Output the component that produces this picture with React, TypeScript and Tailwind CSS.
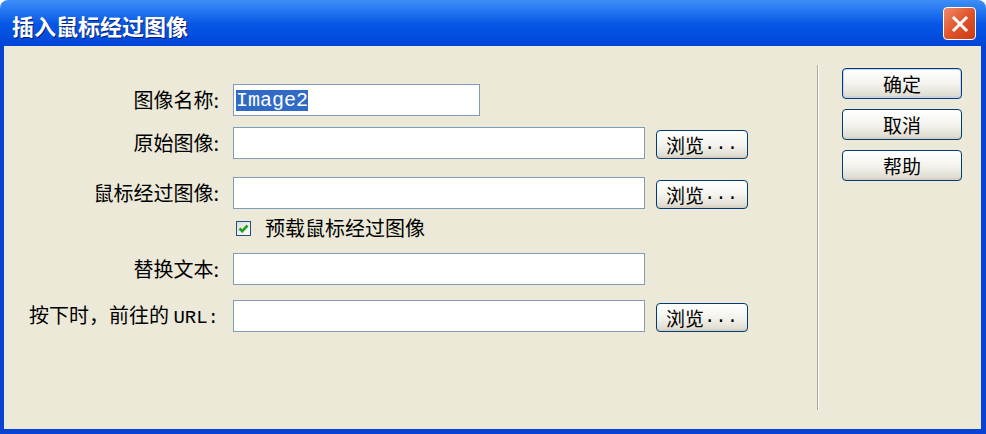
import React from "react";

const cjk = "font-['Noto_Sans_CJK_SC','Noto_Sans',sans-serif]";

function TextBox(props: { wide?: boolean; children?: React.ReactNode }) {
    return (
        <div
            className={`h-[32px] ${props.wide ? "w-[412px]" : "w-[247px]"} bg-white border border-[#7F9DB9] flex items-center px-[1px]`}
        >
            {props.children}
        </div>
    );
}

function XpButton(props: { label: string; className?: string; dots?: boolean }) {
    return (
        <button
            className={`flex items-center justify-center rounded-[4px] border border-[#003C74] bg-gradient-to-b from-white via-[#F4F3EE] to-[#DCD9CC] shadow-[inset_0_-2px_0_#D6D0C5,inset_0_1px_0_#fff] text-[19px] leading-none text-black ${cjk} ${props.className ?? ""}`}
        >
            <span>{props.label}</span>
            {props.dots && <span className="font-['Liberation_Mono',monospace] text-[19px] leading-none">...</span>}
        </button>
    );
}

function Row(props: { label: React.ReactNode; children: React.ReactNode; className?: string }) {
    return (
        <div className={`flex items-center ${props.className ?? ""}`}>
            <div className={`w-[215px] text-right text-[20px] leading-none text-black ${cjk}`}>
                {props.label}
            </div>
            <div className="ml-[14px] flex items-center">{props.children}</div>
        </div>
    );
}

export default function App() {
    return (
        <div className="w-[986px] h-[434px] bg-white flex flex-col overflow-hidden">
            {/* title bar */}
            <div className="h-[46px] rounded-t-[8px] bg-gradient-to-b from-[#3A8CF6] via-[#0758E6] to-[#0045D8] flex items-center justify-between pl-[12px] pr-[10px] border-t border-[#3F8CF3]">
                <h1 className={`text-white text-[22px] font-bold leading-none mt-[2px] [text-shadow:1px_1px_0_#0A1E6B] ${cjk}`}>
                    插入鼠标经过图像
                </h1>
                <div className="w-[33px] h-[33px] rounded-[4px] border border-white bg-gradient-to-br from-[#F08A66] via-[#E0552B] to-[#C83A16] flex items-center justify-center">
                    <svg width="18" height="18" viewBox="0 0 18 18">
                        <path d="M3 3 L15 15 M15 3 L3 15" stroke="white" strokeWidth="3" strokeLinecap="square" />
                    </svg>
                </div>
            </div>

            {/* body */}
            <div className="flex-1 flex bg-[#ECE9D8] border-l-[4px] border-r-[5px] border-b-[5px] border-[#0842D2]">
                <div className="w-[813px] pt-[38px] flex flex-col">
                    <Row label="图像名称:">
                        <TextBox>
                            <span className="bg-[#316AC5] text-white font-['Liberation_Mono',monospace] text-[20px] leading-[21px] ml-[1px]">
                                Image2
                            </span>
                        </TextBox>
                    </Row>
                    <Row label="原始图像:" className="mt-[11px]">
                        <TextBox wide />
                        <XpButton label="浏览" dots className="ml-[11px] w-[92px] h-[29px] mt-[3px]" />
                    </Row>
                    <Row label="鼠标经过图像:" className="mt-[18px]">
                        <TextBox wide />
                        <XpButton label="浏览" dots className="ml-[11px] w-[92px] h-[29px] mt-[3px]" />
                    </Row>
                    <div className="flex items-center mt-[9px] h-[20px] pl-[232px]">
                        <div className="shrink-0 w-[15px] h-[15px] border border-[#1C5180] bg-gradient-to-br from-[#DCDCD7] to-white flex items-center justify-center">
                            <svg width="11" height="11" viewBox="0 0 11 11">
                                <path d="M1.5 5.5 L4.2 8.2 L9.5 2.5" fill="none" stroke="#21A121" strokeWidth="2.6" />
                            </svg>
                        </div>
                        <span className={`ml-[14px] text-[20px] leading-none text-black ${cjk}`}>预载鼠标经过图像</span>
                    </div>
                    <Row label="替换文本:" className="mt-[15px]">
                        <TextBox wide />
                    </Row>
                    <Row
                        label={
                            <>
                                按下时，前往的 <span className="font-['Liberation_Mono',monospace] text-[19px]">URL:</span>
                            </>
                        }
                        className="mt-[15px]"
                    >
                        <TextBox wide />
                        <XpButton label="浏览" dots className="ml-[11px] w-[92px] h-[29px] mt-[3px]" />
                    </Row>
                </div>

                {/* separator */}
                <div className="my-[19px] w-[2px] border-l border-[#ACA899] border-r border-r-white" />

                <div className="flex flex-col gap-[10px] pt-[22px] pl-[23px]">
                    <XpButton label="确定" className="w-[120px] h-[31px] border-[#003C74] shadow-[inset_0_0_0_1px_#C1D3FB,inset_0_-2px_0_#D6D0C5]" />
                    <XpButton label="取消" className="w-[120px] h-[31px]" />
                    <XpButton label="帮助" className="w-[120px] h-[31px]" />
                </div>
            </div>
        </div>
    );
}
